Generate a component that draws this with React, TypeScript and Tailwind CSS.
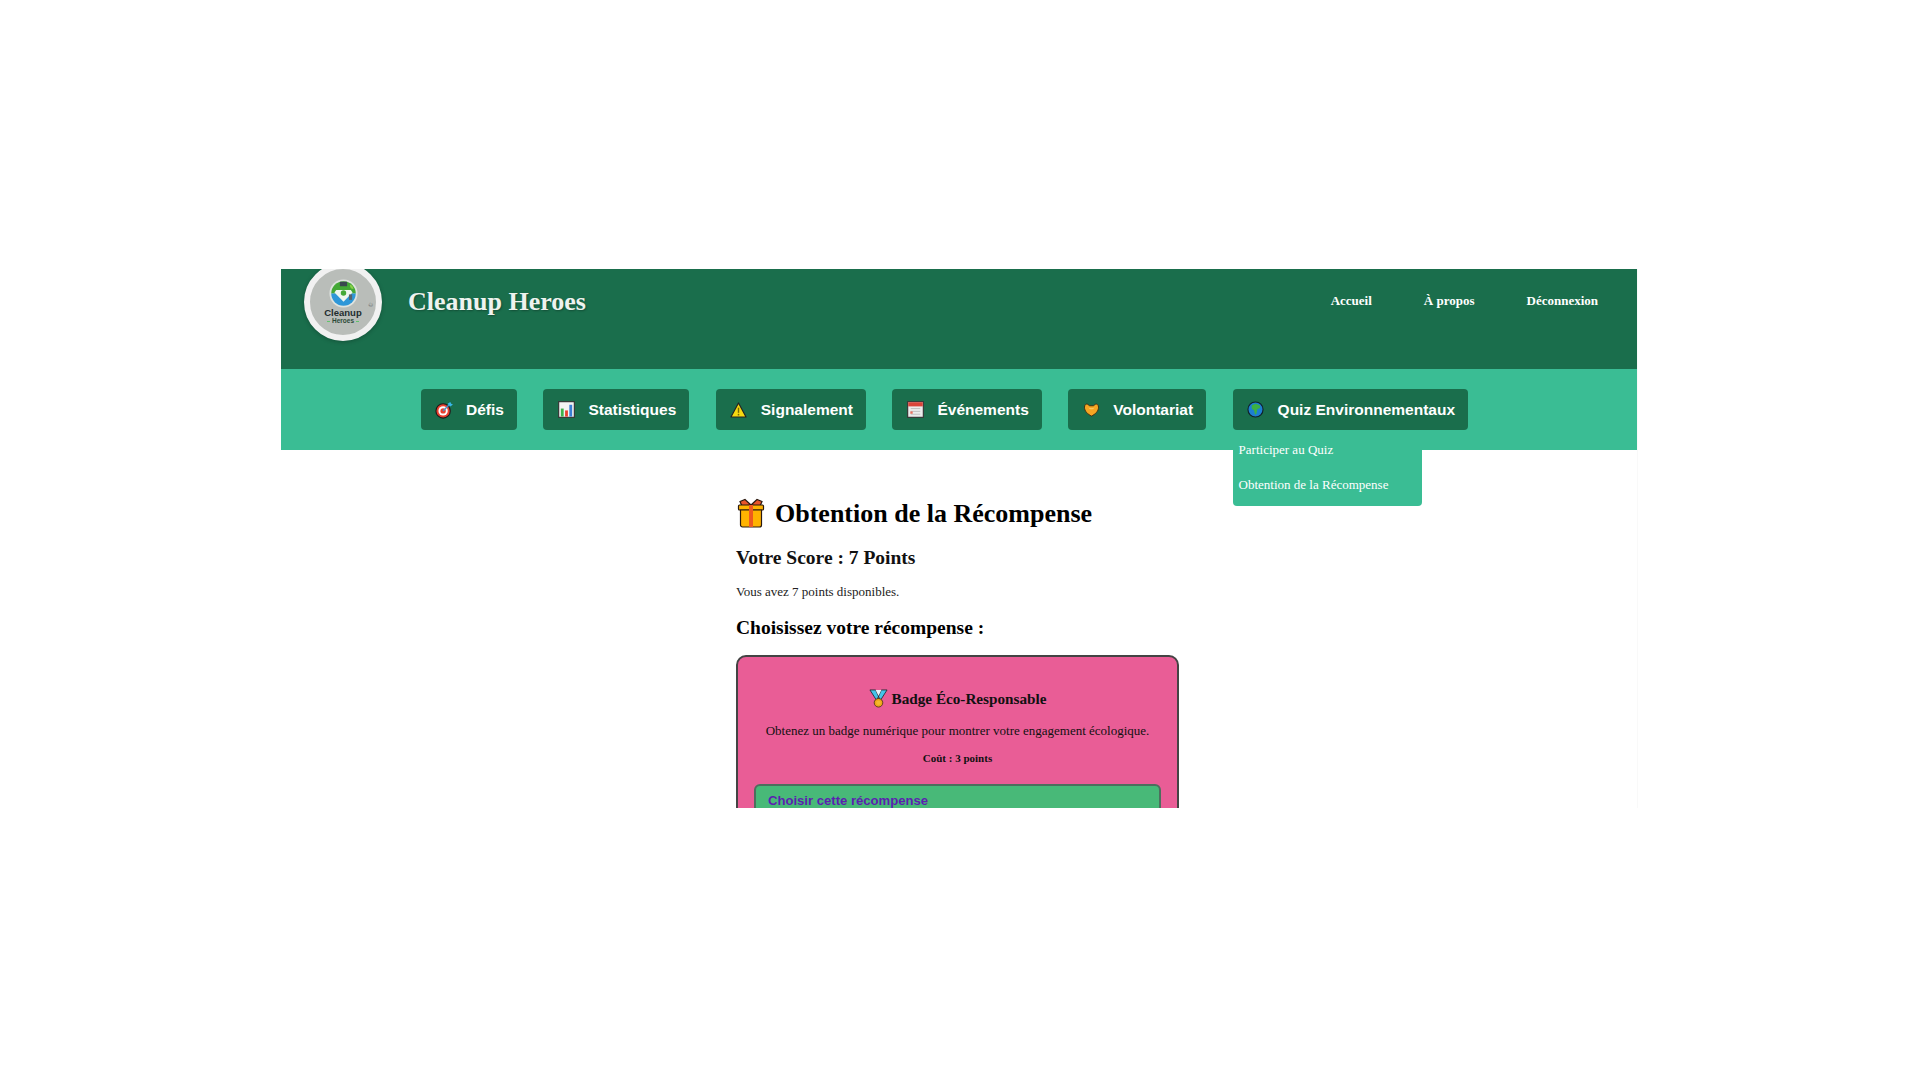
const serif = "font-['Liberation_Serif',serif]";
const sans = "font-['Liberation_Sans',sans-serif]";

function TargetIcon() {
  return (
    <svg viewBox="0 0 20 20" className="w-[18px] h-[18px]">
      <circle cx="9" cy="11" r="8" fill="#e8402f" stroke="#1a1a1a" strokeWidth="1.2" />
      <circle cx="9" cy="11" r="5.2" fill="#fff" />
      <circle cx="9" cy="11" r="3" fill="#e8402f" />
      <path d="M9 11 16 4" stroke="#4a90c8" strokeWidth="1.6" />
      <path d="M14 3l3-2 1 2 2 1-3 2z" fill="#38b6e8" />
    </svg>
  );
}

function ChartIcon() {
  return (
    <svg viewBox="0 0 18 18" className="w-[17px] h-[17px]">
      <rect x="0.7" y="0.7" width="16.6" height="16.6" fill="#f4f4f4" stroke="#333" strokeWidth="1.2" />
      <rect x="3" y="8" width="3" height="8.500" fill="#3fb24b" />
      <rect x="7.500" y="10" width="3" height="6.500" fill="#e8402f" />
      <rect x="12" y="4" width="3" height="12.500" fill="#3a7fd5" />
    </svg>
  );
}

function WarningIcon() {
  return (
    <svg viewBox="0 0 18 17" className="w-[17px] h-[16px]">
      <path d="M9 1 17 16H1z" fill="#f6d911" stroke="#222" strokeWidth="1.2" strokeLinejoin="round" />
      <path d="M9 6v5.500" stroke="#7a6a00" strokeWidth="1.500" />
      <circle cx="9" cy="13.500" r="0.900" fill="#7a6a00" />
    </svg>
  );
}

function CalendarIcon() {
  return (
    <svg viewBox="0 0 18 18" className="w-[17px] h-[17px]">
      <rect x="0.7" y="0.7" width="16.6" height="16.6" fill="#ececec" stroke="#333" strokeWidth="1.2" />
      <rect x="1.300" y="1.300" width="15.400" height="4.400" fill="#d9453a" />
      <path d="M4 8h10M4 11h10M4 14h10" stroke="#bdbdbd" strokeWidth="1" />
      <rect x="3.500" y="11" width="2.500" height="2.500" fill="#e8705f" />
    </svg>
  );
}

function HeartIcon() {
  return (
    <svg viewBox="0 0 18 16" className="w-[17px] h-[15px]">
      <path
        d="M9 15C5 13 1.500 10 1.500 5.500 1.500 3 3.500 1.500 5 2.500L7 4h4l2-1.500C14.500 1.500 16.500 3 16.500 5.500 16.500 10 13 13 9 15z"
        fill="#f5a623"
        stroke="#3a2a10"
        strokeWidth="1"
      />
      <path d="M6 5.500C7 7 11 7 12 5.500 11.500 8.500 6.500 8.500 6 5.500z" fill="#f7d070" />
    </svg>
  );
}

function GlobeIcon() {
  return (
    <svg viewBox="0 0 18 18" className="w-[17px] h-[17px]">
      <circle cx="9" cy="9" r="8" fill="#1d7fd0" stroke="#10202c" strokeWidth="1.2" />
      <path d="M5 4.500 9 3l4.500 1.500.5 3-3 1-1 5-1.500 1-1-4.500L5 8z" fill="#3cb043" />
    </svg>
  );
}

function GiftIcon() {
  return (
    <svg viewBox="0 0 28 30" className="w-[28px] h-[30px]">
      <path d="M14 7 8 1.500 3 3.500 5 8zM14 7l6-5.500 5 2L23 8z" fill="#e8552a" stroke="#2a1a10" strokeWidth="1.200" />
      <rect x="1.500" y="7" width="25" height="5" rx="1" fill="#ffb300" stroke="#2a1a10" strokeWidth="1.200" />
      <path d="M3.500 12h21v15a2 2 0 0 1-2 2h-17a2 2 0 0 1-2-2z" fill="#ffb300" stroke="#2a1a10" strokeWidth="1.200" />
      <rect x="12" y="7" width="4" height="22" fill="#ee5a1f" />
    </svg>
  );
}

function MedalIcon() {
  return (
    <svg viewBox="0 0 20 20" className="w-[19px] h-[19px]">
      <path d="M1 1h6l4 9-3 2zM19 1h-6L9 10l3 2z" fill="#45c4e8" stroke="#1f2a33" strokeWidth="0.900" />
      <path d="M7 1h6l-3 6z" fill="#e9f6fb" />
      <circle cx="10" cy="14.500" r="4.500" fill="#eea516" stroke="#3a2a10" strokeWidth="0.800" />
      <circle cx="10" cy="14.500" r="2.400" fill="#f3b92e" />
    </svg>
  );
}

function Logo() {
  return (
    <div className="relative w-[78px] h-[78px] mt-[-6px] rounded-full border-[6px] border-[#f1f1f1] bg-[#b9bdb9] shadow-[0_1px_4px_rgba(0,0,0,0.25)] flex flex-col items-center shrink-0">
      <svg viewBox="0 0 32 32" className="w-[29px] h-[29px] mt-[10px] shrink-0">
        <circle cx="16" cy="16" r="15.500" fill="#dfe3df" />
        <path d="M2.500 16A13.500 13.500 0 0 1 29.500 16z" fill="#43a836" />
        <path d="M2.500 16A13.500 13.500 0 0 0 29.500 16z" fill="#2e97d8" />
        <path d="M8 12h16l2 3-10 10L6 15z" fill="#eef5ee" />
        <path d="M12 3h8v5h-8z" fill="#3a4850" />
        <path d="M23 6c3 1 4 3 4 5-3 0-4-2-4-5z" fill="#8ad04a" />
        <circle cx="16" cy="15.500" r="3" fill="#43a836" />
        <rect x="22" y="17" width="3.500" height="6" fill="#55636b" />
      </svg>
      <span className={`${sans} text-[9.500px] leading-[9px] font-bold text-[#222c2e]`}>Cleanup</span>
      <span className={`${sans} text-[6.500px] leading-[8px] font-bold text-[#2c4a38] flex items-center gap-[2px]`}>
        <i className="block w-[3px] h-[1px] bg-[#5fc46a]" />
        Heroes
        <i className="block w-[3px] h-[1px] bg-[#5fc46a]" />
      </span>
      <span className={`${sans} absolute top-[33px] right-[3px] text-[6px] leading-[6px] text-[#4a5458]`}>♲</span>
    </div>
  );
}

const menu = [
  { label: "Défis", icon: <TargetIcon /> },
  { label: "Statistiques", icon: <ChartIcon /> },
  { label: "Signalement", icon: <WarningIcon /> },
  { label: "Événements", icon: <CalendarIcon /> },
  { label: "Volontariat", icon: <HeartIcon /> },
];

const links = ["Accueil", "À propos", "Déconnexion"];

export default function App() {
  return (
    <div className="w-full h-screen bg-white pt-[269px] overflow-hidden">
      <div className={`${serif} w-[1357px] h-[539px] ml-[281px] overflow-hidden bg-white border-r border-[#f9f9f9]`}>
        <header className="h-[100px] bg-[#1a6e4c] flex items-start pl-[23px] pr-[39px]">
          <Logo />
          <h1 className="ml-[26px] mt-[17px] text-[26px] leading-[32px] font-bold text-[#eef3ef] [text-shadow:1px_1px_2px_rgba(0,0,0,0.3)]">
            Cleanup Heroes
          </h1>
          <nav className="ml-auto mt-[24px] flex gap-[52px]">
            {links.map((link) => (
              <a key={link} href="#!" className="text-[13px] leading-[16px] font-bold text-white">
                {link}
              </a>
            ))}
          </nav>
        </header>

        <nav className={`${sans} h-[81px] bg-[#3abd94] flex items-start gap-[26.500px] pl-[140px] pt-[20px]`}>
          {menu.map((item) => (
            <a
              key={item.label}
              href="#!"
              className="h-[41px] px-[13px] bg-[#1a6e4c] rounded-[4px] flex items-center gap-[12px] text-[15.500px] font-bold text-white"
            >
              <span className="w-[20px] flex justify-center">{item.icon}</span>
              {item.label}
            </a>
          ))}
          <div className="relative">
            <a
              href="#!"
              className="h-[41px] px-[13px] bg-[#1a6e4c] rounded-[4px] flex items-center gap-[12px] text-[15.500px] font-bold text-white"
            >
              <span className="w-[20px] flex justify-center">
                <GlobeIcon />
              </span>
              Quiz Environnementaux
            </a>
            <div className={`${serif} absolute top-[41px] left-0 w-[189px] h-[76px] pl-[6px] pt-[11px] bg-[#3abd94] rounded-b-[4px] text-[13px] leading-[17px] text-white`}>
              <a href="#!" className="block">Participer au Quiz</a>
              <a href="#!" className="block mt-[18px]">Obtention de la Récompense</a>
            </div>
          </div>
        </nav>

        <main className="w-[443px] ml-[455px] text-black">
          <h1 className="mt-[48px] flex items-center gap-[10px] text-[26px] leading-[32px] font-bold">
            <span className="pl-[1px] mt-[-2px]">
              <GiftIcon />
            </span>
            Obtention de la Récompense
          </h1>
          <h2 className="mt-[17px] text-[19.500px] leading-[22px] font-bold text-[#111]">Votre Score : 7 Points</h2>
          <p className="mt-[15px] text-[13px] leading-[15px] text-[#222]">Vous avez 7 points disponibles.</p>
          <h3 className="mt-[18px] text-[19.500px] leading-[22px] font-bold">Choisissez votre récompense :</h3>
          <div className="mt-[16px] px-[16px] pt-[32px] pb-[20px] bg-[#e95d96] border-2 border-[#444] rounded-[10px] text-center">
            <h4 className="flex justify-center items-center gap-[4px] text-[15.200px] leading-[18px] font-bold text-[#111]">
              <MedalIcon />
              Badge Éco-Responsable
            </h4>
            <p className="mt-[15px] text-[13px] leading-[15px] text-[#111]">
              Obtenez un badge numérique pour montrer votre engagement écologique.
            </p>
            <p className="mt-[14px] text-[11px] leading-[13px] font-bold text-[#111]">Coût : 3 points</p>
            <a
              href="#!"
              className={`${sans} block mt-[19px] h-[40px] px-[12px] pt-[7px] bg-[#48b978] border-2 border-[#4d6f5e] rounded-[6px] text-left text-[13.100px] leading-[16px] font-bold text-[#5b1fb0]`}
            >
              Choisir cette récompense
            </a>
          </div>
        </main>
      </div>
    </div>
  );
}
